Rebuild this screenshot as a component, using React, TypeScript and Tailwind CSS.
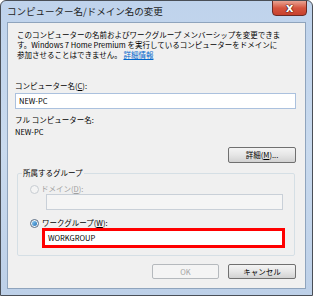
const jp = "font-['Noto_Sans_CJK_JP','Liberation_Sans',sans-serif]";

function Radio({ checked, disabled }: { checked?: boolean; disabled?: boolean }) {
  return (
    <span
      className={`flex h-[9px] w-[9px] shrink-0 items-center justify-center rounded-full border ${
        disabled ? 'border-[#c8cdd2] bg-[#f4f4f4]' : 'border-[#5a6d84] bg-gradient-to-br from-[#e8eef4] to-[#ffffff]'
      }`}
    >
      {checked && <span className="h-[5px] w-[5px] rounded-full bg-gradient-to-br from-[#8fd0f5] to-[#1d6fb6]" />}
    </span>
  );
}

function Button({ label, disabled }: { label: React.ReactNode; disabled?: boolean }) {
  return (
    <div
      className={`flex items-center justify-center rounded-[2px] border ${
        disabled
          ? 'border-[#b5b9bd] bg-[#f4f4f4] text-[#a3a3a3]'
          : 'border-[#707070] bg-gradient-to-b from-[#f4f4f4] via-[#e6e6e6] to-[#d2d2d2] text-black'
      }`}
    >
      {label}
    </div>
  );
}

export default function App() {
  return (
    <div className={`${jp} h-[296px] w-[313px] overflow-hidden rounded-t-[6px] border border-[#4a4f57] bg-gradient-to-b from-[#bfd3ec] via-[#c9daee] to-[#bdd0e8] text-[7.5px] leading-[10px] text-black`}>
      {/* title bar */}
      <div className="flex h-[21px] items-start justify-between">
        <span className="mt-[4px] ml-[6px] text-[9.5px] leading-[12px] text-[#1e1e1e]">コンピューター名/ドメイン名の変更</span>
        <div className="-mt-px mr-[5px] flex h-[16px] w-[35px] items-center justify-center rounded-b-[4px] border border-[#6a2a24] bg-gradient-to-b from-[#e8a292] via-[#d5543f] to-[#c7412d]">
          <span className="font-['DejaVu_Sans',sans-serif] text-[12px] font-bold leading-[12px] text-white [text-shadow:0_0_1px_#3a0e08,0_0_1px_#3a0e08,0_0_1px_#3a0e08]">x</span>
        </div>
      </div>

      {/* client area */}
      <div className="mx-[6px] flex h-[267px] flex-col border border-[#8fa4bd] bg-[#f0f0f0] pt-[7px] pr-[9px] pl-[7px]">
        <div className="ml-[2px] whitespace-nowrap">
          <div>このコンピューターの名前およびワークグループ メンバーシップを変更できま</div>
          <div>す。Windows 7 Home Premium を実行しているコンピューターをドメインに</div>
          <div>
            参加させることはできません。 <span className="text-[#0066cc] underline">詳細情報</span>
          </div>
        </div>

        <div className="mt-[21px]">
          コンピューター名(<span className="underline">C</span>):
        </div>
        <div className="mt-[2px] flex h-[16px] items-center border border-[#abc1de] bg-white px-[3px]">NEW-PC</div>

        <div className="mt-[6px]">フル コンピューター名:</div>
        <div className="mt-[2px]">NEW-PC</div>

        <div className="mt-[10px] flex justify-end">
          <div className="h-[16px] w-[68px] [&>div]:h-full">
            <Button label={<>詳細(<span className="underline">M</span>)...</>} />
          </div>
        </div>

        <fieldset className="mt-[5px] mr-[1px] ml-[2px] rounded-[2px] border border-[#d5dfe5] pr-0 pb-[7px] pl-[12px]">
          <legend className="ml-[-8px] px-[1px] leading-[10px]">所属するグループ</legend>
          <div className="mt-[6px] flex h-[10px] items-center gap-[2px] text-[#a0a0a0]">
            <Radio disabled />
            <span>
              ドメイン(<span className="underline">D</span>):
            </span>
          </div>
          <div className="mr-[11px] ml-[16px] h-[16px] border border-[#c9d0d8] bg-[#f5f5f5]" />

          <div className="mt-[8px] flex h-[10px] items-center gap-[3px]">
            <Radio checked />
            <span>
              ワークグループ(<span className="underline">W</span>):
            </span>
          </div>
          <div className="mr-[9px] ml-[12px] flex h-[20px] items-center border-[3px] border-[#ff0000] bg-white px-[3px]">WORKGROUP</div>
        </fieldset>

        <div className="mt-[8px] flex justify-end gap-[9px]">
          <div className="h-[15px] w-[67px] [&>div]:h-full">
            <Button label="OK" disabled />
          </div>
          <div className="h-[15px] w-[68px] [&>div]:h-full">
            <Button label="キャンセル" />
          </div>
        </div>
      </div>
    </div>
  );
}
